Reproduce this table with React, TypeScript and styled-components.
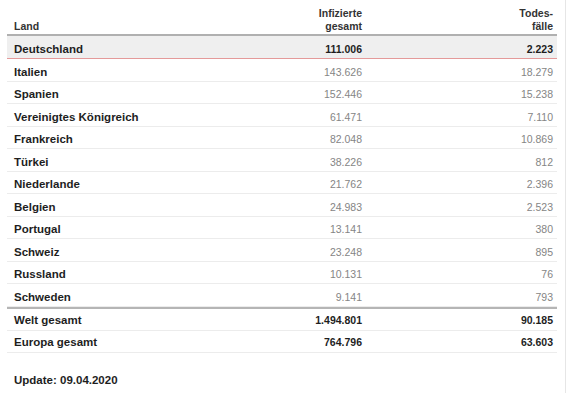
import React from "react";
import styled, { createGlobalStyle } from "styled-components";

const Global = createGlobalStyle`
  *, *::before, *::after { box-sizing: border-box; }
  html, body { margin: 0; padding: 0; background: #fff; }
  body { font-family: "Liberation Sans", Arial, Helvetica, sans-serif; color: #222; }
`;

const Page = styled.div`
  padding: 4px 0 0 7px;
  width: 566px;
  height: 393px;
  border-right: 1px solid #e6e6e6;
`;

const Content = styled.div`
  width: 550px;
`;

const Grid = styled.div`
  display: grid;
  grid-template-columns: 1fr 110px 191px;
`;

const HeadCell = styled.div<{ $right?: boolean }>`
  display: flex;
  align-items: flex-end;
  justify-content: ${(p) => (p.$right ? "flex-end" : "flex-start")};
  text-align: ${(p) => (p.$right ? "right" : "left")};
  padding: 0 4px 1px 7px;
  font-size: 10.5px;
  line-height: 13px;
  font-weight: bold;
  color: #333;
  border-bottom: 2px solid #b0b0b0;
  height: 32px;
`;

type Variant = "normal" | "highlight" | "total" | "firstTotal";

const Cell = styled.div<{ $right?: boolean; $v: Variant; $bold?: boolean }>`
  display: flex;
  align-items: center;
  justify-content: ${(p) => (p.$right ? "flex-end" : "flex-start")};
  padding: ${(p) => (p.$v === "normal" ? "4px" : p.$v === "highlight" ? "3px" : "1px")} 4px 0 7px;
  height: ${(p) =>
    p.$v === "highlight" ? "23px" : p.$v === "firstTotal" ? "24px" : "22.5px"};
  font-size: ${(p) => (p.$right ? "10.5px" : "11.5px")};
  font-weight: ${(p) => (p.$right && !p.$bold ? "normal" : "bold")};
  color: ${(p) => (p.$right && !p.$bold ? "#858585" : "#1e1e1e")};
  background: ${(p) => (p.$v === "highlight" ? "#efefef" : "#fff")};
  border-bottom: 1px solid
    ${(p) => (p.$v === "highlight" ? "#e49a9a" : "#ececec")};
  border-top: ${(p) => (p.$v === "firstTotal" ? "2px solid #b5b5b5" : "none")};
`;

const Update = styled.div`
  margin-top: 21px;
  padding-left: 7px;
  font-size: 11.5px;
  font-weight: bold;
  color: #1e1e1e;
`;

type Row = { land: string; inf: string; tod: string; v: Variant };

const rows: Row[] = [
  { land: "Deutschland", inf: "111.006", tod: "2.223", v: "highlight" },
  { land: "Italien", inf: "143.626", tod: "18.279", v: "normal" },
  { land: "Spanien", inf: "152.446", tod: "15.238", v: "normal" },
  { land: "Vereinigtes Königreich", inf: "61.471", tod: "7.110", v: "normal" },
  { land: "Frankreich", inf: "82.048", tod: "10.869", v: "normal" },
  { land: "Türkei", inf: "38.226", tod: "812", v: "normal" },
  { land: "Niederlande", inf: "21.762", tod: "2.396", v: "normal" },
  { land: "Belgien", inf: "24.983", tod: "2.523", v: "normal" },
  { land: "Portugal", inf: "13.141", tod: "380", v: "normal" },
  { land: "Schweiz", inf: "23.248", tod: "895", v: "normal" },
  { land: "Russland", inf: "10.131", tod: "76", v: "normal" },
  { land: "Schweden", inf: "9.141", tod: "793", v: "normal" },
  { land: "Welt gesamt", inf: "1.494.801", tod: "90.185", v: "firstTotal" },
  { land: "Europa gesamt", inf: "764.796", tod: "63.603", v: "total" },
];

export default function App() {
  return (
    <>
      <Global />
      <Page>
        <Content>
          <Grid>
            <HeadCell>Land</HeadCell>
            <HeadCell $right>
              Infizierte
              <br />
              gesamt
            </HeadCell>
            <HeadCell $right>
              Todes-
              <br />
              fälle
            </HeadCell>
            {rows.map((r) => {
              const bold = r.v !== "normal";
              return (
                <React.Fragment key={r.land}>
                  <Cell $v={r.v}>{r.land}</Cell>
                  <Cell $v={r.v} $right $bold={bold}>
                    {r.inf}
                  </Cell>
                  <Cell $v={r.v} $right $bold={bold}>
                    {r.tod}
                  </Cell>
                </React.Fragment>
              );
            })}
          </Grid>
          <Update>Update: 09.04.2020</Update>
        </Content>
      </Page>
    </>
  );
}
